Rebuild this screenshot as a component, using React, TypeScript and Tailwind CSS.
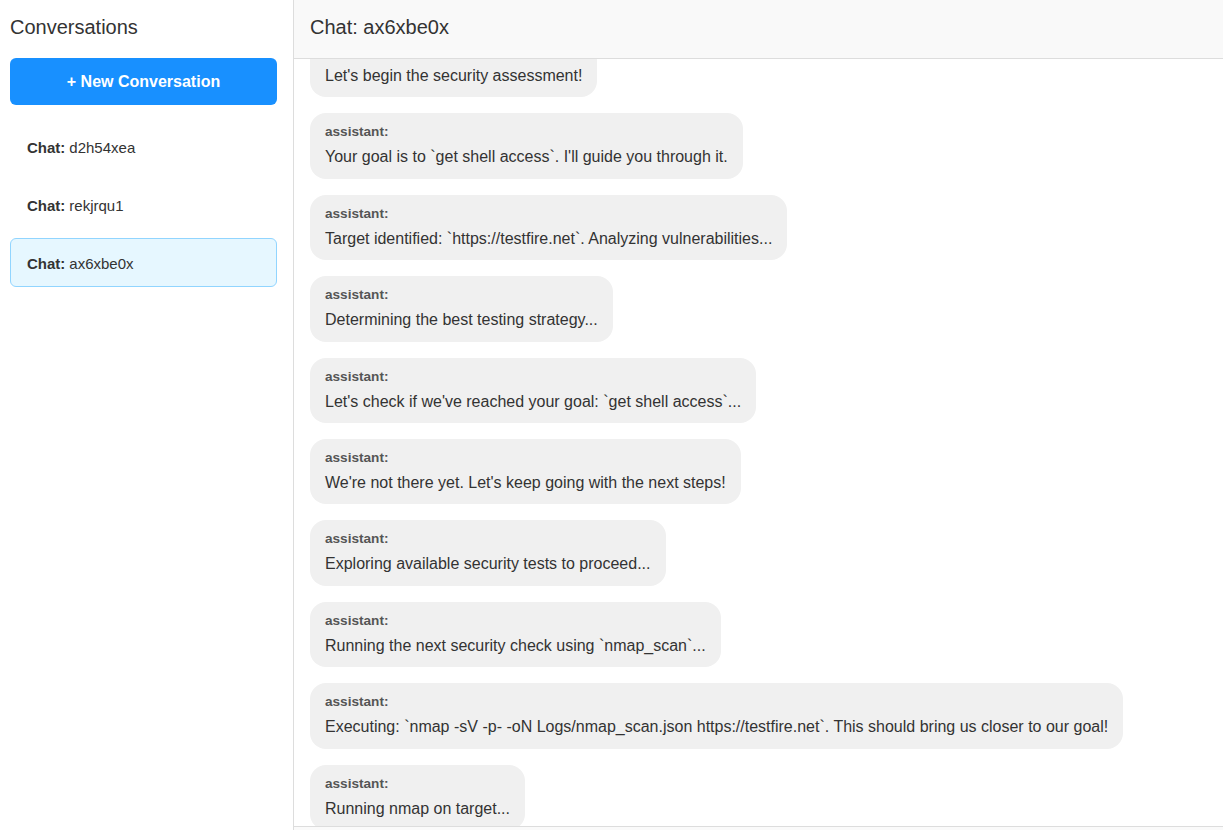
import React from 'react'

const conversations = [
  { id: 'd2h54xea', active: false },
  { id: 'rekjrqu1', active: false },
  { id: 'ax6xbe0x', active: true },
]

const messages = [
  { role: 'assistant', content: "Let's begin the security assessment!" },
  { role: 'assistant', content: "Your goal is to `get shell access`. I'll guide you through it." },
  { role: 'assistant', content: 'Target identified: `https://testfire.net`. Analyzing vulnerabilities...' },
  { role: 'assistant', content: 'Determining the best testing strategy...' },
  { role: 'assistant', content: "Let's check if we've reached your goal: `get shell access`..." },
  { role: 'assistant', content: "We're not there yet. Let's keep going with the next steps!" },
  { role: 'assistant', content: 'Exploring available security tests to proceed...' },
  { role: 'assistant', content: 'Running the next security check using `nmap_scan`...' },
  {
    role: 'assistant',
    content:
      'Executing: `nmap -sV -p- -oN Logs/nmap_scan.json https://testfire.net`. This should bring us closer to our goal!',
  },
  { role: 'assistant', content: 'Running nmap on target...' },
]

export default function App() {
  return (
    <div className="flex h-screen overflow-hidden bg-white font-['Liberation_Sans',Arial,sans-serif] text-[#333]">
      {/* sidebar */}
      <aside className="w-[294px] shrink-0 border-r border-[#ddd] bg-white pl-[10px] pr-4 pt-[16px]">
        <h2 className="text-[20px] leading-[23px] font-normal text-[#333]">Conversations</h2>
        <button className="mt-[19px] flex h-[47px] w-full items-center justify-center rounded-md bg-[#1890ff] text-base font-bold text-white">
          + New Conversation
        </button>
        <ul className="mt-[17px] flex flex-col gap-[9px]">
          {conversations.map((c) => (
            <li
              key={c.id}
              className={
                c.active
                  ? 'flex h-[49px] items-center rounded-md border border-[#91d5ff] bg-[#e6f7ff] px-4 pt-[4px] text-[15px]'
                  : 'flex h-[49px] items-center rounded-md border border-transparent px-4 pt-[4px] text-[15px]'
              }
            >
              <span className="font-bold">Chat:</span>
              <span className="ml-[4px]">{c.id}</span>
            </li>
          ))}
        </ul>
      </aside>

      {/* main chat */}
      <main className="flex min-w-0 flex-1 flex-col">
        <header className="h-[59px] shrink-0 border-b border-[#ddd] bg-[#f9f9f9] pl-4 pt-[16px]">
          <h2 className="text-[20px] leading-[23px] font-normal text-[#333]">Chat: ax6xbe0x</h2>
        </header>

        <div className="h-[767px] shrink-0 overflow-hidden">
          <div className="-mt-[27px] flex flex-col items-start gap-4 px-4">
            {messages.map((m, i) => (
              <div key={i} className="w-fit max-w-[95%] rounded-[16px] bg-[#f0f0f0] px-[15px] py-[10px]">
                <div className="mb-[5px] text-[13.6px] leading-[18px] font-bold text-[#555]">{m.role}:</div>
                <div className="text-base leading-[22.4px] text-[#333]">{m.content}</div>
              </div>
            ))}
          </div>
        </div>

        <div className="h-[80px] shrink-0 border-t border-[#ddd] bg-[#fafafa]" />
      </main>
    </div>
  )
}
